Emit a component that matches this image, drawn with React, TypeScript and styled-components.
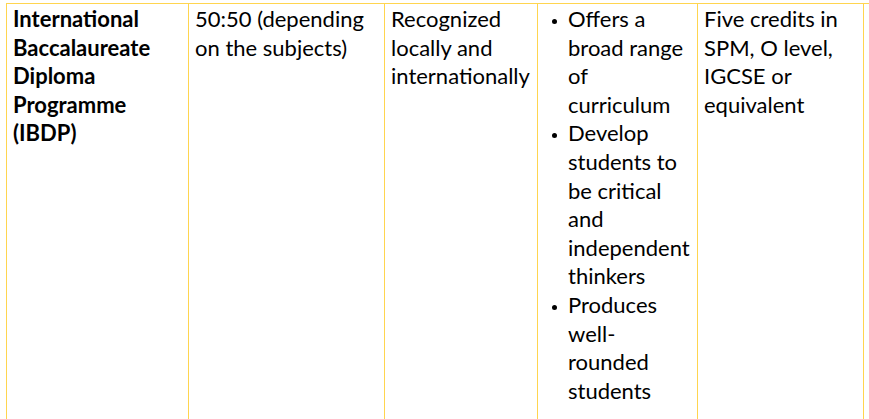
import styled, { createGlobalStyle } from 'styled-components';

const GlobalStyle = createGlobalStyle`
  html, body {
    margin:0;
    padding:0;
    background:#fff;
    overflow:hidden;
  }
  body {
    font-family: Lato, "Liberation Sans", sans-serif;
    color:#000;
  }
`

const Page = styled.div`
  padding:3px 0 0 6px;
`

const Table = styled.div`
  display:grid;
  grid-template-columns:182px 196px 153px 160px 167px;
  border-top:1px solid #ffd54f;
`

const Cell = styled.div<{ $bold?: boolean; $last?: boolean }>`
  border-left:1px solid #ffd54f;
  border-right:${p => (p.$last ? '1px solid #ffd54f' : 'none')};
  padding:1px 5px 60px 6px;
  font-size:22px;
  line-height:28.6px;
  white-space:nowrap;
  font-weight:${p => (p.$bold ? 700 : 400)};
`

const BulletList = styled.ul`
  margin:0;
  padding:0 0 0 24px;
  list-style:none;
`

const Bullet = styled.li`
  position:relative;
  &::before {
    content:'';
    position:absolute;
    left:-16px;
    top:14px;
    width:5px;
    height:5px;
    border-radius:50%;
    background:#000;
  }
`

export default function App() {
  return (
    <>
      <GlobalStyle />
      <Page>
        <Table>
          <Cell $bold>
            International<br />Baccalaureate<br />Diploma<br />Programme<br />(IBDP)
          </Cell>
          <Cell>
            50:50 (depending<br />on the subjects)
          </Cell>
          <Cell>
            Recognized<br />locally and<br />internationally
          </Cell>
          <Cell>
            <BulletList>
              <Bullet>Offers a<br />broad range<br />of<br />curriculum</Bullet>
              <Bullet>Develop<br />students to<br />be critical<br />and<br />independent<br />thinkers</Bullet>
              <Bullet>Produces<br />well-<br />rounded<br />students</Bullet>
            </BulletList>
          </Cell>
          <Cell $last>
            Five credits in<br />SPM, O level,<br />IGCSE or<br />equivalent
          </Cell>
        </Table>
      </Page>
    </>
  );
}
